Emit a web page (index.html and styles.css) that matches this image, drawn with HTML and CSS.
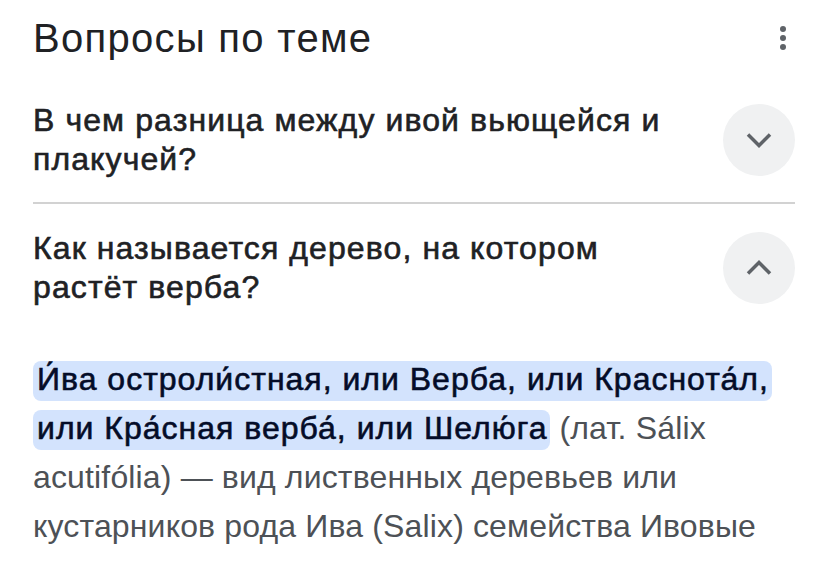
FILE: index.html
```html
<!DOCTYPE html>
<html lang="ru">
<head>
<meta charset="utf-8">
<link rel="stylesheet" href="styles.css">
</head>
<body>
<div class="panel">
  <div class="header">
    <h2 class="title">Вопросы по теме</h2>
    <button class="more" aria-label="Ещё">
      <svg width="8" height="26" viewBox="0 0 8 26"><circle cx="4" cy="4" r="3" fill="#5f6368"/><circle cx="4" cy="13" r="3" fill="#5f6368"/><circle cx="4" cy="22" r="3" fill="#5f6368"/></svg>
    </button>
  </div>
  <div class="question q1">
    <div class="qtext">В чем разница между ивой вьющейся и плакучей?</div>
    <div class="toggle">
      <svg width="28" height="28" viewBox="0 0 28 28"><path d="M3 8.5l11 11 11-11" fill="none" stroke="#5f6368" stroke-width="3.5"/></svg>
    </div>
  </div>
  <div class="question q2">
    <div class="qtext">Как называется дерево, на котором растёт верба?</div>
    <div class="toggle">
      <svg width="28" height="28" viewBox="0 0 28 28"><path d="M3 19.5l11-11 11 11" fill="none" stroke="#5f6368" stroke-width="3.5"/></svg>
    </div>
  </div>
  <p class="answer"><mark class="hl">И́ва остроли́стная, или Верба, или Краснота́л, или Кра́сная верба́, или Шелю́га</mark> (лат. Sálix acutifólia) — вид лиственных деревьев или кустарников рода Ива (Salix) семейства Ивовые (Salicaceae).</p>
</div>
</body>
</html>
```

FILE: styles.css
```css
html, body {
  margin: 0;
  padding: 0;
  background: #ffffff;
}
body {
  font-family: "Liberation Sans", Arial, sans-serif;
  color: #202124;
}
.panel {
  padding: 0 33px;
}
.header {
  display: flex;
  align-items: flex-start;
  justify-content: space-between;
  height: 96px;
}
.title {
  margin: 0;
  padding-top: 16px;
  font-size: 40px;
  line-height: 44px;
  letter-spacing: 1.3px;
  font-weight: 400;
  color: #202124;
}
.more {
  border: 0;
  background: none;
  padding: 0;
  margin: 25px 8px 0 0;
  width: 8px;
  height: 26px;
  display: flex;
}
.question {
  display: flex;
  align-items: center;
  justify-content: space-between;
}
.q1 {
  height: 88px;
  border-bottom: 2px solid #d2d2d2;
  padding-bottom: 18px;
}
.q2 {
  padding-top: 24px;
  height: 80px;
}
.qtext {
  width: 670px;
  font-size: 32px;
  line-height: 39px;
  letter-spacing: 1.1px;
  font-weight: 400;
  -webkit-text-stroke: 0.6px #202124;
  color: #202124;
}
.toggle {
  width: 72px;
  height: 72px;
  border-radius: 50%;
  background: #f0f1f2;
  display: flex;
  align-items: center;
  justify-content: center;
  flex-shrink: 0;
}
.answer {
  margin: 47px 0 0 0;
  font-size: 32px;
  line-height: 49px;
  letter-spacing: 0.15px;
  color: #4d5156;
}
.hl {
  background: #d3e3fd;
  color: #040c28;
  letter-spacing: 1px;
  -webkit-text-stroke: 0.6px #040c28;
  border-radius: 8px;
  padding: 0 3px 4px 4px;
  -webkit-box-decoration-break: clone;
  box-decoration-break: clone;
}
```
